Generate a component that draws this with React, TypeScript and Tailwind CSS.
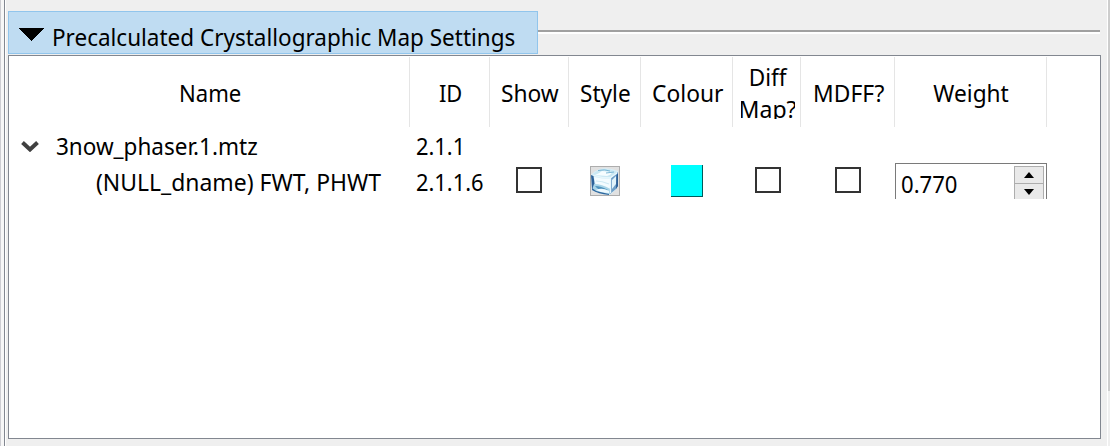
import React from "react";

const font = "font-['Noto_Sans',sans-serif] text-[23.5px] leading-8 text-black whitespace-nowrap";

function Label({ children, className = "" }: { children: React.ReactNode; className?: string }) {
  return <span className={`inline-block shrink-0 ${className}`}>{children}</span>;
}

function Header({ width, children }: { width: string; children: React.ReactNode }) {
  return (
    <div className={`${width} flex h-full shrink-0 items-center justify-center overflow-hidden border-r border-[#e5e5e5] pt-[2px] pl-[2px]`}>
      {children}
    </div>
  );
}

function Check({ className = "" }: { className?: string }) {
  return <span className={`block size-[26px] border-2 border-[#333] bg-white ${className}`} />;
}

function IceCube() {
  return (
    <div className="size-[30px] border border-[#adadad] bg-[#e1e1e1]">
      <svg viewBox="0 0 28 28" className="block size-7">
        <path d="M0 8Q3 4 9 2Q17 0 27 4L27 19Q25 24 18 28Q8 27 1 23Z" fill="#d9eff8" />
        <path d="M1 8Q5 4 10 2Q18 1 26 5L20 10Q9 10 1 8Z" fill="#cbe8f3" />
        <path d="M4 8Q9 6 11 4L20 5Q22 7 16 9Z" fill="#f6fdff" />
        <path d="M7 3.5Q14 2 19 4M15 6 23 5" fill="none" stroke="#6fafd0" strokeWidth=".9" />
        <path d="M20 11 27 5V19L25 22 19 27Z" fill="#6f9fc8" />
        <path d="M21 13 25 9V17L21 22Z" fill="#e2f4fb" />
        <path d="M25.5 8 27 6V19L25 22Z" fill="#2b5f96" />
        <path d="M0 8 2.5 9 4 20 1 22Z" fill="#2d6299" />
        <path d="M3 10Q11 12 19 12V21Q11 20 5 18Z" fill="#f4fcff" />
        <path d="M3 17Q11 17 19 22V27Q8 26 1 23Z" fill="#a9d5e8" />
        <path d="M4 19Q10 19 17 23L12 24Q7 23 4 19Z" fill="#4f93be" />
        <path d="M5 23Q11 20 18 24V26Q10 26 5 23Z" fill="#eefaff" />
        <path d="M1 21Q4 24 9 25L18 27V28Q7 27 1 23Z" fill="#2e679e" />
        <path d="M5 14Q11 14 18 17" fill="none" stroke="#cfeaf4" strokeWidth="1.2" />
        <path d="M2 8Q10 11 19 11L26 6M19.5 11V26" fill="none" stroke="#e7f7fc" strokeWidth="1.3" />
      </svg>
    </div>
  );
}

export default function App() {
  return (
    <div className={`flex h-[446px] w-[1110px] overflow-hidden bg-[#efefef] ${font}`}>
      <div className="w-px shrink-0 bg-[#cdcdd2]" />
      <div className="w-[3px] shrink-0 bg-[#f7f7f7]" />
      <div className="w-px shrink-0 bg-[#828790]" />
      <div className="w-px shrink-0 bg-white" />
      <main className="ml-[2px] flex w-[1093px] shrink-0 flex-col pt-[11px]">
        <div className="flex h-[43px] shrink-0">
          <button className="flex h-[43px] w-[530px] shrink-0 items-center border border-[#91c5ec] bg-[#bfdcf2] pl-[10px] pt-[8px] text-left">
            <svg viewBox="0 0 25 13" className="-mt-[5px] h-[13px] w-[25px] shrink-0" shapeRendering="crispEdges">
              <path d="M0 0H25L12.5 13Z" />
            </svg>
            <Label className="ml-[8px] origin-left scale-x-[0.957]">Precalculated Crystallographic Map Settings</Label>
          </button>
          <div className="mt-[19px] h-1 w-[562px] border-t-2 border-b-2 border-t-[#a0a0a0] border-b-white" />
        </div>
        <section className="mt-px h-[384px] shrink-0 border border-[#828790] bg-white">
          <div className="flex h-[72px] pt-px pb-px">
            <Header width="w-[401px]"><Label className="scale-x-[0.94]">Name</Label></Header>
            <Header width="w-[80px]"><Label className="scale-x-[0.93]">ID</Label></Header>
            <Header width="w-[79px]"><Label className="scale-x-[0.97]">Show</Label></Header>
            <Header width="w-[72px]"><Label className="scale-x-[0.96]">Style</Label></Header>
            <Header width="w-[92px]"><Label className="scale-x-[0.97]">Colour</Label></Header>
            <Header width="w-[68px]">
              <div className="-mt-[6px] flex h-[58px] w-[54px] flex-col items-center overflow-hidden">
                <Label className="scale-x-[0.96]">Diff</Label>
                <Label className="scale-x-[0.98]">Map?</Label>
              </div>
            </Header>
            <Header width="w-[94px]"><Label className="scale-x-[0.97]">MDFF?</Label></Header>
            <Header width="w-[152px]"><Label className="scale-x-[0.965]">Weight</Label></Header>
          </div>
          <div className="flex h-[35px] pt-[2px]">
            <div className="flex w-[401px] shrink-0 pl-3">
              <svg viewBox="0 0 18 12" className="mt-[10px] h-3 w-[18px]">
                <path d="M1.5 2.5 9 9.5 16.5 2.5" fill="none" stroke="#404040" strokeWidth="4" />
              </svg>
              <Label className="ml-[17px] origin-left scale-x-[0.957]">3now_phaser.1.mtz</Label>
            </div>
            <Label className="ml-[6px] origin-left scale-x-[0.93]">2.1.1</Label>
          </div>
          <div className="flex h-9 overflow-hidden">
            <div className="w-[401px] shrink-0 pl-[87px] pt-[3px]"><Label className="origin-left scale-x-[0.975]">(NULL_dname) FWT, PHWT</Label></div>
            <div className="w-[80px] shrink-0 pl-[6px] pt-[3px]"><Label className="origin-left scale-x-[0.93]">2.1.1.6</Label></div>
            <div className="w-[79px] shrink-0 pl-[26px] pt-1"><Check /></div>
            <div className="w-[72px] shrink-0 pl-[21px] pt-[3px]"><IceCube /></div>
            <div className="w-[92px] shrink-0 pl-[30px] pt-[2px]">
              <div className="size-8 border-r border-b border-[#005b5b] bg-[#00ffff]" />
            </div>
            <div className="w-[68px] shrink-0 pl-[22px] pt-1"><Check /></div>
            <div className="w-[94px] shrink-0 pl-[34px] pt-1"><Check /></div>
            <div className="flex h-[42px] w-[152px] shrink-0 justify-between border border-[#7a7a7a] pl-[5px] pr-[2px]">
              <Label className="mt-[4px] origin-left scale-x-[0.94]">0.770</Label>
              <div className="mt-[2px] w-[30px] border border-[#adadad] bg-[#e9e9e9]">
                <div className="flex h-[17px] items-center justify-center border-b border-[#adadad]">
                  <svg viewBox="0 0 10 6" className="h-[6px] w-[10px]"><path d="M5 0 10 6H0Z" /></svg>
                </div>
                <div className="flex h-[16px] items-center justify-center">
                  <svg viewBox="0 0 10 6" className="h-[6px] w-[10px]"><path d="M0 0H10L5 6Z" /></svg>
                </div>
              </div>
            </div>
          </div>
        </section>
      </main>
      <div className="ml-[6px] w-px shrink-0 bg-white" />
      <div className="h-[391px] w-[2px] shrink-0 bg-[#cdcdcd]" />
    </div>
  );
}
